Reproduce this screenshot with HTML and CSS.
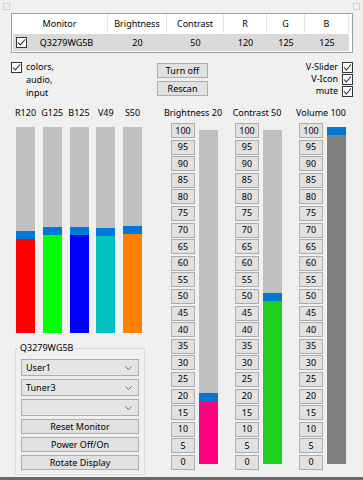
FILE: index.html
```html
<!DOCTYPE html>
<html>
<head>
<meta charset="utf-8">
<link rel="stylesheet" href="styles.css">
</head>
<body>
<div class="app">
  <div class="grips"><span class="grip"></span><span class="grip"></span></div>

  <div class="list">
    <div class="lv-head">
      <div class="hc">Monitor</div>
      <div class="hc">Brightness</div>
      <div class="hc">Contrast</div>
      <div class="hc">R</div>
      <div class="hc">G</div>
      <div class="hc">B</div>
    </div>
    <div class="lv-row">
      <div class="rc rc0"><span class="cb"><svg viewBox="0 0 11 11" width="11" height="11"><path d="M2 5.5 L4.3 8 L9 2.5" fill="none" stroke="#222" stroke-width="1.1"/></svg></span><span class="rc0-text">Q3279WG5B</span></div>
      <div class="rc">20</div>
      <div class="rc">50</div>
      <div class="rc">120</div>
      <div class="rc">125</div>
      <div class="rc">125</div>
    </div>
  </div>

  <div class="controls">
    <div class="ctl-left">
      <span class="cb"><svg viewBox="0 0 11 11" width="11" height="11"><path d="M2 5.5 L4.3 8 L9 2.5" fill="none" stroke="#222" stroke-width="1.1"/></svg></span>
      <span class="multi">colors,<br>audio,<br>input</span>
    </div>
    <div class="ctl-mid">
      <div class="btn">Turn off</div>
      <div class="btn">Rescan</div>
    </div>
    <div class="ctl-right">
      <div class="rchk"><span>V-Slider</span><span class="cb"><svg viewBox="0 0 11 11" width="11" height="11"><path d="M2 5.5 L4.3 8 L9 2.5" fill="none" stroke="#222" stroke-width="1.1"/></svg></span></div>
      <div class="rchk"><span>V-Icon</span><span class="cb"><svg viewBox="0 0 11 11" width="11" height="11"><path d="M2 5.5 L4.3 8 L9 2.5" fill="none" stroke="#222" stroke-width="1.1"/></svg></span></div>
      <div class="rchk"><span>mute</span><span class="cb"><svg viewBox="0 0 11 11" width="11" height="11"><path d="M2 5.5 L4.3 8 L9 2.5" fill="none" stroke="#222" stroke-width="1.1"/></svg></span></div>
    </div>
  </div>

  <div class="main">
    <div class="left">
      <div class="color-bars">
        <div class="cbar"><div class="lbl">R120</div><div class="track"><div class="rest"></div><div class="thumb"></div><div class="fill red" style="height:94px"></div></div></div>
        <div class="cbar"><div class="lbl">G125</div><div class="track"><div class="rest"></div><div class="thumb"></div><div class="fill green" style="height:98px"></div></div></div>
        <div class="cbar"><div class="lbl">B125</div><div class="track"><div class="rest"></div><div class="thumb"></div><div class="fill blue" style="height:98px"></div></div></div>
        <div class="cbar"><div class="lbl">V49</div><div class="track"><div class="rest"></div><div class="thumb"></div><div class="fill teal" style="height:97px"></div></div></div>
        <div class="cbar"><div class="lbl">S50</div><div class="track"><div class="rest"></div><div class="thumb"></div><div class="fill orange" style="height:99px"></div></div></div>
      </div>

      <fieldset class="group">
        <legend>Q3279WG5B</legend>
        <div class="combo"><span>User1</span><svg class="chev" viewBox="0 0 7 4" width="7" height="4"><path d="M0.5 0.5 L3.5 3.5 L6.5 0.5" fill="none" stroke="#707070" stroke-width="1"/></svg></div>
        <div class="combo"><span>Tuner3</span><svg class="chev" viewBox="0 0 7 4" width="7" height="4"><path d="M0.5 0.5 L3.5 3.5 L6.5 0.5" fill="none" stroke="#707070" stroke-width="1"/></svg></div>
        <div class="combo"><span></span><svg class="chev" viewBox="0 0 7 4" width="7" height="4"><path d="M0.5 0.5 L3.5 3.5 L6.5 0.5" fill="none" stroke="#707070" stroke-width="1"/></svg></div>
        <div class="gbtn">Reset Monitor</div>
        <div class="gbtn">Power Off/On</div>
        <div class="gbtn">Rotate Display</div>
      </fieldset>
    </div>

    <div class="sliders">
      <div class="slider">
        <div class="slbl">Brightness 20</div>
        <div class="sbody">
          <div class="nums">
            <div class="num">100</div><div class="num">95</div><div class="num">90</div><div class="num">85</div><div class="num">80</div><div class="num">75</div><div class="num">70</div><div class="num">65</div><div class="num">60</div><div class="num">55</div><div class="num">50</div><div class="num">45</div><div class="num">40</div><div class="num">35</div><div class="num">30</div><div class="num">25</div><div class="num">20</div><div class="num">15</div><div class="num">10</div><div class="num">5</div><div class="num">0</div>
          </div>
          <div class="vbar"><div class="rest"></div><div class="thumb"></div><div class="fill pink" style="height:63px"></div></div>
        </div>
      </div>
      <div class="slider">
        <div class="slbl">Contrast 50</div>
        <div class="sbody">
          <div class="nums">
            <div class="num">100</div><div class="num">95</div><div class="num">90</div><div class="num">85</div><div class="num">80</div><div class="num">75</div><div class="num">70</div><div class="num">65</div><div class="num">60</div><div class="num">55</div><div class="num">50</div><div class="num">45</div><div class="num">40</div><div class="num">35</div><div class="num">30</div><div class="num">25</div><div class="num">20</div><div class="num">15</div><div class="num">10</div><div class="num">5</div><div class="num">0</div>
          </div>
          <div class="vbar"><div class="rest"></div><div class="thumb"></div><div class="fill lime" style="height:163px"></div></div>
        </div>
      </div>
      <div class="slider">
        <div class="slbl">Volume 100</div>
        <div class="sbody">
          <div class="nums">
            <div class="num">100</div><div class="num">95</div><div class="num">90</div><div class="num">85</div><div class="num">80</div><div class="num">75</div><div class="num">70</div><div class="num">65</div><div class="num">60</div><div class="num">55</div><div class="num">50</div><div class="num">45</div><div class="num">40</div><div class="num">35</div><div class="num">30</div><div class="num">25</div><div class="num">20</div><div class="num">15</div><div class="num">10</div><div class="num">5</div><div class="num">0</div>
          </div>
          <div class="vbar vol"><div class="thumb"></div><div class="fill dark"></div></div>
        </div>
      </div>
    </div>
  </div>

  <div class="bottomline"></div>
</div>
</body>
</html>
```

FILE: styles.css
```css
* { box-sizing: border-box; }
html, body { margin: 0; padding: 0; }
body {
  width: 363px;
  height: 480px;
  overflow: hidden;
  background: #f0f0f0;
  font-family: "Noto Sans", "Open Sans", sans-serif;
  font-size: 9px;
  line-height: 12px;
  color: #000;
}
.app { display: flex; flex-direction: column; height: 480px; }

/* top grips */
.grips { display: flex; justify-content: space-between; padding: 3px 3px 0; height: 10px; }
.grip { width: 7px; height: 7px; border: 1px solid #d2d2d2; }

/* list view */
.list {
  margin: 3px 10px 0 11px;
  height: 40px;
  border: 1px solid #a0a0a0;
  background: #fff;
}
.lv-head {
  display: grid;
  grid-template-columns: 96px 59px 57px 43px 38px 44px;
  height: 19px;
}
.hc {
  display: flex; align-items: center; justify-content: center;
  border-right: 1px solid #e5e5e5;
  padding-top: 1px;
}
.lv-row {
  display: grid;
  grid-template-columns: 95px 59px 57px 43px 38px 44px;
  height: 17px;
  margin: 1px 0 0 1px;
  width: 336px;
  background: #d9d9d9;
}
.rc { display: flex; align-items: center; justify-content: center; }
.rc0 { justify-content: flex-start; padding-left: 3px; }
.rc0-text { flex: 1; text-align: center; padding-right: 2px; }

.cb {
  width: 11px; height: 11px;
  border: 1px solid #333;
  background: #fff;
  display: inline-flex;
  flex: none;
}
.cb svg { display: block; margin: -1px; }

/* controls row */
.controls { display: flex; height: 51px; }
.ctl-left { width: 157px; display: flex; align-items: flex-start; padding: 9px 0 0 11px; }
.multi { margin-left: 4px; line-height: 13px; margin-top: -2px; }
.ctl-mid { width: 51px; padding-top: 10px; display: flex; flex-direction: column; gap: 3px; }
.btn {
  height: 15px;
  background: #e1e1e1;
  border: 1px solid #adadad;
  display: flex; align-items: center; justify-content: center;
}
.ctl-right { flex: 1; display: flex; flex-direction: column; align-items: flex-end; padding: 8px 10px 0 0; }
.rchk { display: flex; align-items: center; height: 12px; gap: 4px; }

/* main */
.main { display: flex; flex: 1; }
.left { width: 155px; display: flex; flex-direction: column; }
.color-bars { display: flex; gap: 7.75px; padding: 3px 0 0 16px; }
.cbar { width: 19px; display: flex; flex-direction: column; align-items: center; }
.lbl { white-space: nowrap; height: 12px; }
.track {
  margin-top: 8px;
  width: 19px; height: 206px;
  display: flex; flex-direction: column;
}
.rest { flex: 1; background: #c0c0c0; }
.thumb { height: 8px; background: #0078d7; }
.red { background: #ff0000; }
.green { background: #00ff00; }
.blue { background: #0000ff; }
.teal { background: #00c0c0; }
.orange { background: #ff8000; }
.pink { background: #ff0080; }
.lime { background: #1ecf1e; }
.dark { background: #808080; flex: 1; }

.group {
  margin: 9px 0 0 15px;
  width: 130px;
  padding: 5px 5px 4px 5px;
  border: 1px solid #dcdcdc;
  display: flex; flex-direction: column; gap: 3px;
  min-width: 0;
}
.group legend { padding: 0 2px; margin-left: -3px; line-height: 12px; }
.combo {
  height: 17px;
  background: #e5e5e5;
  border: 1px solid #adadad;
  display: flex; align-items: center; justify-content: space-between;
  padding: 0 6px 0 4px;
}
.gbtn {
  height: 15px;
  background: #e1e1e1;
  border: 1px solid #adadad;
  display: flex; align-items: center; justify-content: center;
}

.sliders { display: flex; padding-left: 16px; gap: 17px; }
.slider { width: 47px; display: flex; flex-direction: column; align-items: center; }
.slbl { white-space: nowrap; height: 15px; padding-top: 3px; margin-right: 3px; }
.sbody { display: flex; gap: 4px; margin-top: 4px; }
.nums { width: 24px; height: 347px; display: flex; flex-direction: column; justify-content: space-between; }
.num {
  height: 15px;
  background: #e1e1e1;
  border: 1px solid #adadad;
  display: flex; align-items: center; justify-content: center;
}
.vbar { width: 19px; height: 334px; margin-top: 7px; display: flex; flex-direction: column; }
.vbar.vol { margin-top: 4px; height: 337px; }

.bottomline { height: 3px; background: #696969; }
```
